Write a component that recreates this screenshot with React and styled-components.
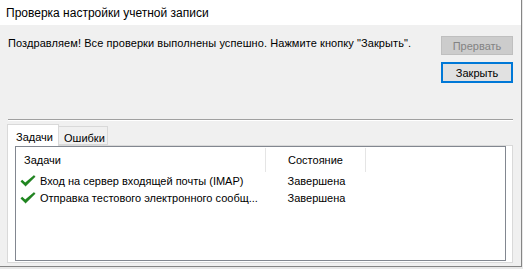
import styled, { createGlobalStyle } from "styled-components";

const Global = createGlobalStyle`
  html, body {
    margin: 0;
    padding: 0;
    background: #e8e8e8;
  }
  * { box-sizing: border-box; }
`;

const tasks = [
  { name: "Вход на сервер входящей почты (IMAP)", state: "Завершена" },
  { name: "Отправка тестового электронного сообщ...", state: "Завершена" },
];

function Check() {
  return (
    <svg width="16" height="12" viewBox="0 0 16 12">
      <path d="M0.5 6.5 L2.2 4.8 L5.2 7.6 L13.6 0.4 L15.2 1.6 L5.4 11.2 Z" fill="#1f861f" />
      <path d="M5.4 11.2 L15.2 1.6 L13.6 0.4" fill="none" stroke="#0f6a0f" strokeWidth="0.6" />
    </svg>
  );
}

export default function App() {
  return (
    <>
      <Global />
      <Window>
        <TitleBar>Проверка настройки учетной записи</TitleBar>
        <Body>
          <Top>
            <Message>Поздравляем! Все проверки выполнены успешно. Нажмите кнопку "Закрыть".</Message>
            <ButtonCol>
              <Button disabled>Прервать</Button>
              <Button focused>Закрыть</Button>
            </ButtonCol>
          </Top>
          <TabStrip>
            <Tab active>Задачи</Tab>
            <Tab>Ошибки</Tab>
          </TabStrip>
          <Panel>
            <List>
              <Header>
                <HeadCell width={250}>Задачи</HeadCell>
                <HeadCell width={100} center>Состояние</HeadCell>
              </Header>
              {tasks.map((t) => (
                <Row key={t.name}>
                  <NameCell>
                    <Check />
                    <span>{t.name}</span>
                  </NameCell>
                  <StateCell>{t.state}</StateCell>
                </Row>
              ))}
            </List>
          </Panel>
        </Body>
      </Window>
    </>
  );
}

const Window = styled.div`
  width: 522px;
  height: 267px;
  background: #f0f0f0;
  border-right: 1px solid #858585;
  border-bottom: 1px solid #858585;
  display: flex;
  flex-direction: column;
  font-family: "Liberation Sans", Arial, sans-serif;
  font-size: 11px;
  color: #000;
`;

const TitleBar = styled.div`
  flex-shrink: 0;
  height: 25px;
  background: #fff;
  padding-left: 6px;
  display: flex;
  align-items: center;
  font-family: "Liberation Sans", Arial, sans-serif;
  font-size: 12px;
  color: #000;
`;

const Body = styled.div`
  flex: 1;
  padding: 0 8px 0 7px;
  display: flex;
  flex-direction: column;
`;

/* etched separator under the message row */
const Top = styled.div`
  flex-shrink: 0;
  display: flex;
  justify-content: space-between;
  padding: 11px 0 0 1px;
  margin-left: 1px;
  height: 95px;
  border-bottom: 1px solid #a0a0a0;
  box-shadow: 0 1px 0 #ffffff;
`;

const Message = styled.div`
  line-height: 13px;
  padding-top: 1px;
  margin-left: -1px;
  letter-spacing: 0.08px;
`;

const ButtonCol = styled.div`
  display: flex;
  flex-direction: column;
  gap: 7px;
`;

const Button = styled.button`
  width: 72px;
  height: ${(p) => (p.focused ? 21 : 19)}px;
  padding: 0;
  font-family: inherit;
  font-size: 11px;
  background: ${(p) => (p.disabled ? "#cccccc" : "#e1e1e1")};
  color: ${(p) => (p.disabled ? "#838383" : "#000")};
  border: ${(p) => (p.focused ? "2px solid #0078d7" : "1px solid #bfbfbf")};
`;

const TabStrip = styled.div`
  flex-shrink: 0;
  display: flex;
  align-items: flex-end;
  margin-top: 4px;
  height: 21px;
  position: relative;
  z-index: 1;
`;

const Tab = styled.div`
  height: ${(p) => (p.active ? 22 : 19)}px;
  padding: ${(p) => (p.active ? "6px 7px 0 8px" : "5px 5px 0 5px")};
  margin-bottom: ${(p) => (p.active ? -1 : 0)}px;
  background: ${(p) => (p.active ? "#fff" : "#f0f0f0")};
  border: 1px solid #d9d9d9;
  border-bottom: ${(p) => (p.active ? "none" : "1px solid #d9d9d9")};
  border-left: ${(p) => (p.active ? "1px solid #d9d9d9" : "none")};
  line-height: 13px;
  width: ${(p) => (p.active ? 52 : 49)}px;
`;

const Panel = styled.div`
  flex-shrink: 0;
  height: 118px;
  background: #fff;
  border: 1px solid #d9d9d9;
  padding: 0 6px 1px 7px;
  display: flex;
`;

const List = styled.div`
  flex: 1;
  border: 1px solid #828790;
  background: #fff;
`;

const Header = styled.div`
  display: flex;
  height: 25px;
  padding-top: 1px;
`;

const HeadCell = styled.div`
  width: ${(p) => p.width}px;
  border-right: 1px solid #e5e5e5;
  display: flex;
  align-items: center;
  justify-content: ${(p) => (p.center ? "center" : "flex-start")};
  padding-left: ${(p) => (p.center ? 0 : 8)}px;
`;

const Row = styled.div`
  display: flex;
  height: 17px;
  align-items: center;
`;

const NameCell = styled.div`
  width: 250px;
  display: flex;
  align-items: center;
  gap: 4px;
  padding-left: 4px;
  white-space: nowrap;
  overflow: hidden;
`;

const StateCell = styled.div`
  width: 101px;
  text-align: center;
`;
